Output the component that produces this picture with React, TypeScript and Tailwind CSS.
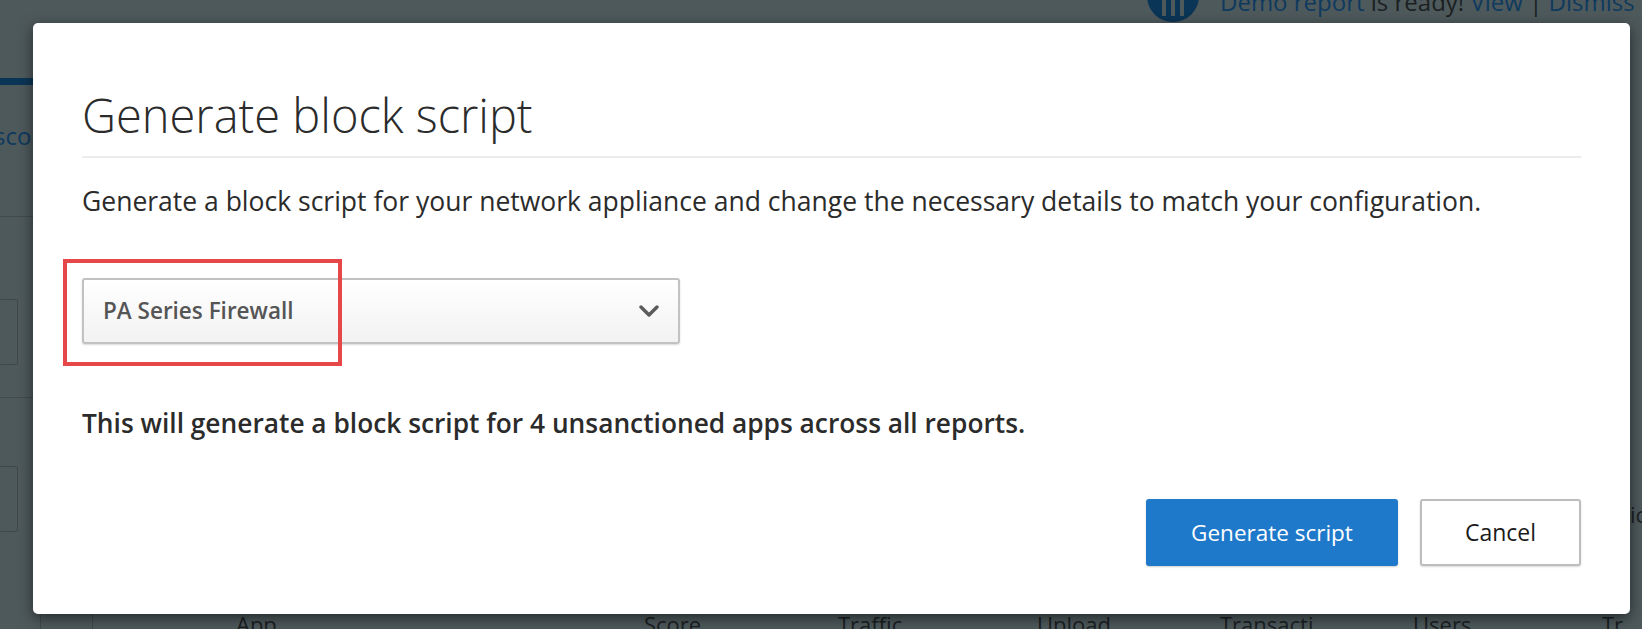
import React from 'react';

const font = { fontFamily: '"Open Sans", "Noto Sans", Arial, sans-serif' };

function Backdrop() {
  // the page that sits dimmed behind the dialog
  return (
    <div className="flex h-full w-full flex-col bg-[#4e595c] text-[#0d2c44]">
      <div className="flex h-[23px] pl-[1147px]">
        <div className="flex items-start gap-[21px]">
          <div className="-mt-[30px] flex h-[52px] w-[52px] shrink-0 items-end justify-center gap-[5px] rounded-full bg-[#0b3556] pb-[6px]">
            <span className="h-[26px] w-[4px] bg-[#4e595c]" />
            <span className="h-[26px] w-[4px] bg-[#4e595c]" />
            <span className="h-[26px] w-[4px] bg-[#4e595c]" />
          </div>
          <div className="-mt-[16px] text-[24px] whitespace-nowrap">
            <span className="text-[#0f3a5e]">Demo report</span>
            <span className="text-[#1b1f22]"> is ready! </span>
            <span className="text-[#0f3a5e]">View</span>
            <span className="text-[#1b1f22]"> | </span>
            <span className="text-[#0f3a5e]">Dismiss</span>
          </div>
        </div>
      </div>
      <div className="flex flex-1">
        <div className="flex w-[40px] flex-col">
          <div className="mt-[55px] h-[7px] w-[34px] bg-[#0b3556]" />
          <div className="mt-[33px] text-[24px] text-[#0f3a5e] -ml-[6px]">sco</div>
          <div className="mt-[62px] h-px bg-[#414b4e]" />
          <div className="mt-[82px] h-[66px] w-[18px] rounded-r-[3px] border border-l-0 border-[#3f494c]" />
          <div className="mt-[32px] h-px bg-[#414b4e]" />
          <div className="mt-[68px] h-[66px] w-[18px] rounded-r-[3px] border border-l-0 border-[#3f494c]" />
        </div>
        <div className="flex-1" />
        <div className="flex w-[12px] flex-col">
          <div className="mt-[475px] text-[22px] text-[#1b1f22]">ic</div>
        </div>
      </div>
      <div className="flex h-[16px] items-start overflow-hidden text-[22px] leading-[26px] text-[#1b1f22]">
        <div className="h-full w-[41px] border-r border-[#3f494c]" />
        <div className="h-full w-[52px] border-r border-[#3f494c]" />
        <div className="-mt-[2px] pl-[143px] w-[551px]">App</div>
        <div className="-mt-[2px] w-[194px]">Score</div>
        <div className="-mt-[2px] w-[199px]">Traffic</div>
        <div className="-mt-[2px] w-[183px]">Upload</div>
        <div className="-mt-[2px] w-[193px]">Transacti...</div>
        <div className="-mt-[2px] w-[189px]">Users</div>
        <div className="-mt-[2px]">Tr</div>
      </div>
    </div>
  );
}

function Chevron() {
  return (
    <svg width="20" height="12" viewBox="0 0 20 12" fill="none">
      <path d="M2 2l8 8 8-8" stroke="#5b5b5b" strokeWidth="3.4" strokeLinecap="round" strokeLinejoin="round" />
    </svg>
  );
}

export default function App() {
  return (
    <div className="relative h-[629px] w-[1642px] overflow-hidden" style={font}>
      <Backdrop />

      <div className="absolute left-[33px] top-[23px] w-[1597px] rounded-[5px] bg-white px-[49px] pb-[48px] shadow-[0_4px_14px_rgba(0,0,0,0.55)]">
        <div className="border-b-2 border-[#ececec] pt-[66px] pb-[14px]">
          <h1 className="text-[47px] leading-[53px] font-light text-[#2b2b2b]">Generate block script</h1>
        </div>

        <p className="mt-[27px] text-[26.5px] leading-[32px] text-[#2b2b2b] whitespace-nowrap">
          Generate a block script for your network appliance and change the necessary details to match your configuration.
        </p>

        <button className="mt-[61px] flex h-[66px] w-[598px] items-center justify-between rounded-[3px] border-2 border-[#c2c2c2] bg-gradient-to-b from-white to-[#f2f2f2] pl-[19px] pr-[19px] shadow-[0_1px_2px_rgba(0,0,0,0.15)]">
          <span className="text-[22.5px] font-semibold text-[#555555]">PA Series Firewall</span>
          <Chevron />
        </button>

        <p className="mt-[63px] text-[26.3px] leading-[32px] font-semibold text-[#2b2b2b] whitespace-nowrap">
          This will generate a block script for 4 unsanctioned apps across all reports.
        </p>

        <div className="mt-[60px] flex justify-end gap-[22px]">
          <button className="h-[67px] w-[252px] rounded-[3px] bg-[#1f79ca] text-[22.5px] text-white shadow-[0_1px_2px_rgba(0,0,0,0.2)]">
            Generate script
          </button>
          <button className="h-[67px] w-[161px] rounded-[3px] border-2 border-[#bdbdbd] bg-white text-[23px] text-[#1b1b1b] shadow-[0_1px_2px_rgba(0,0,0,0.15)]">
            Cancel
          </button>
        </div>
      </div>

      {/* red annotation box around the appliance picker */}
      <div className="absolute left-[63px] top-[259px] h-[107px] w-[279px] border-[4px] border-[#e6484a]" />
    </div>
  );
}
